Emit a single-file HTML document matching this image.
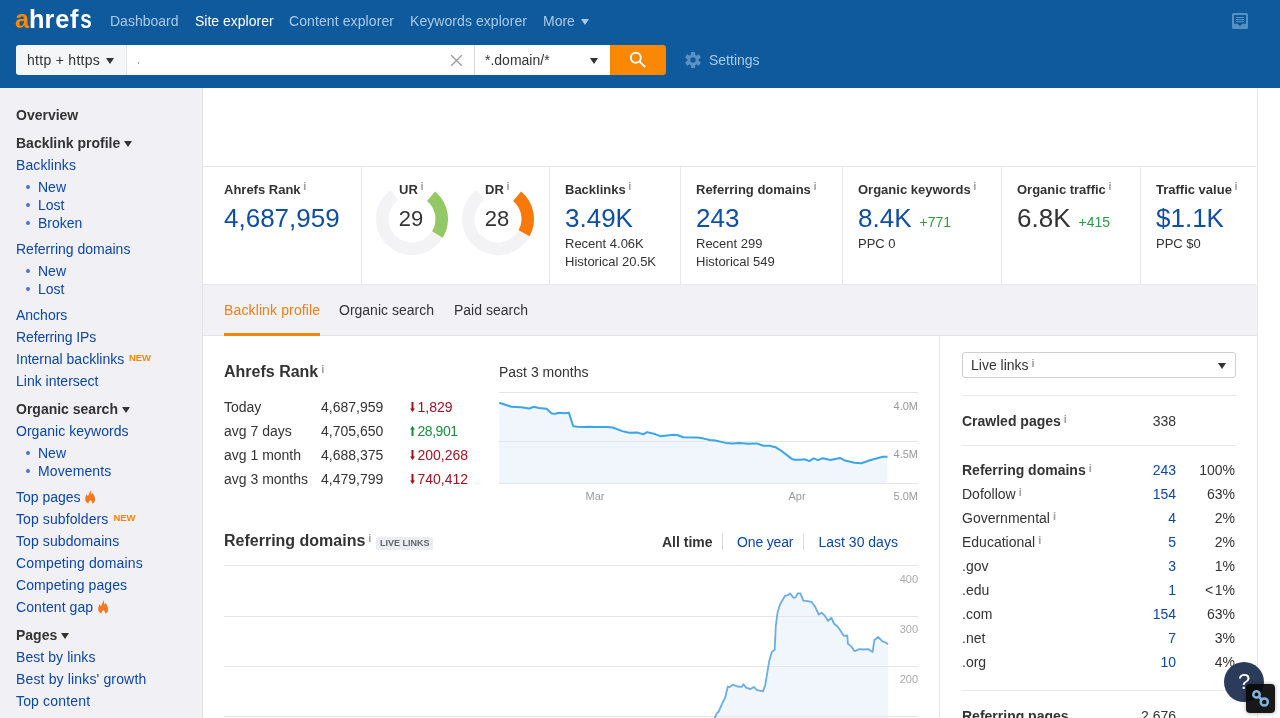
<!DOCTYPE html>
<html lang="en">
<head>
<meta charset="utf-8">
<title>Site explorer</title>
<style>
*{box-sizing:border-box;margin:0;padding:0}
html,body{width:1280px;height:718px;overflow:hidden;background:#fff}
body{font-family:"Liberation Sans",Arial,sans-serif;font-size:14px;color:#333;position:relative}
.abs{position:absolute;white-space:nowrap}
a{color:#0c47a6;text-decoration:none}
#wrap{position:absolute;left:0;top:0;width:1280px;height:718px;will-change:transform}
/* header */
#hdr{position:absolute;left:0;top:0;width:1280px;height:88px;background:#0f5a9c}
#logo{position:absolute;left:15px;top:4px;font-weight:bold;font-size:26px;line-height:30px;color:#fff;letter-spacing:0px;transform-origin:0 0;transform:scaleX(0.975)}
#logo b{color:#ff8800}
.nav{position:absolute;top:12px;font-size:14px;line-height:18px;color:#a9c9ea;white-space:nowrap}
.nav.on{color:#fff}
#sb{position:absolute;left:16px;top:45px;width:650px;height:30px}
#sb .inp{position:absolute;left:111px;top:0;width:484px;height:30px;background:#fff}
#sb .proto{position:absolute;left:0;top:0;width:111px;height:30px;border-radius:3px 0 0 3px;background:#f5f6f8;border-right:1px solid #e3e4e8;font-size:14px;line-height:30px;padding-left:11px;color:#333}
#sb .mode{position:absolute;left:458px;top:0;width:136px;height:30px;border-left:1px solid #d6d6d6;font-size:14px;line-height:30px;padding-left:10px;color:#333}
#sb .go{position:absolute;left:594px;top:0;width:56px;height:30px;border-radius:0 3px 3px 0;background:#fb8805}
.tri{display:inline-block;width:0;height:0;border-left:4px solid transparent;border-right:4px solid transparent;border-top:6px solid #333;vertical-align:middle}
/* sidebar */
#side{position:absolute;left:0;top:88px;width:203px;height:630px;background:#f0f0f5;border-right:1px solid #e1e1e6}
#side .i{position:absolute;left:16px;font-size:14px;line-height:18px;white-space:nowrap;color:#0c47a6}
#side .h{font-weight:bold;color:#333}
#side .s{left:38px}
#side .s:before{content:"";position:absolute;left:-12.3px;top:6.8px;width:4.6px;height:4.6px;border-radius:50%;background:#4677c3}
.fire{display:inline-block;vertical-align:top;margin:2px 0 0 .5px}
.new{font-size:9.5px;font-weight:bold;color:#f9840a;letter-spacing:-.1px;position:relative;top:-3px;margin-left:1px}
.dn{font-size:22px;line-height:24px;text-align:center;color:#333}
.dl{font-size:14px;color:#2d9a3f;margin-left:8px}
.h2{position:absolute;font-weight:bold;font-size:16px;line-height:20px;color:#333;white-space:nowrap}
.rk{position:absolute;font-size:14px;line-height:24px;white-space:nowrap;color:#333}
.rk.r{color:#a0141e}.rk.g{color:#198c3c}
.ar{display:inline-block;margin-right:3px;position:relative;top:0}
.h2 .inf{margin-left:3px}
.badge{display:inline-block;vertical-align:top;margin:6px 0 0 5px;height:13px;padding:0 3.5px;background:#ecedf3;border-radius:2px;font-size:9px;line-height:13.5px;color:#666;font-weight:bold}
.sel{border:1px solid #cfcfcf;border-radius:3px;background:#fff;padding-left:8px;line-height:24px;font-size:14px;color:#333}
.hl{left:962px;width:274px;height:1px;background:#e9e9ec}
.rr{position:absolute;font-size:14px;line-height:24px;white-space:nowrap;color:#333}
.rr .inf,.sel .inf{margin-left:3px;top:-3.2px}
.rr.b{font-weight:bold}.rr.rt{text-align:right}.rr.lk{color:#0c47a6}
/* main */
#rm{position:absolute;left:1257px;top:88px;width:23px;height:630px;background:#fff;border-left:1px solid #e6e6ea}
#stats{position:absolute;left:203px;top:166px;width:1053px;height:119px;border-top:1px solid #e6e6ea;border-bottom:1px solid #e6e6ea}
.vd{position:absolute;top:0;width:1px;height:117px;background:#e7e7eb}
.st{position:absolute;font-weight:bold;font-size:13px;line-height:16px;color:#333;white-space:nowrap}
.big{position:absolute;font-size:26px;line-height:30px;color:#0f4ea3;white-space:nowrap}
.sm{position:absolute;font-size:13px;line-height:16px;color:#333;white-space:nowrap}
.inf{font-size:11px;font-weight:bold;color:#a0a0a0;position:relative;top:-4px;margin-left:2.6px;line-height:1px}
#tabs{position:absolute;left:203px;top:285px;width:1054px;height:51px;background:#f1f1f6;border-bottom:1px solid #e3e3e8}
#tabs span{position:absolute;top:16px;font-size:14px;line-height:18px;white-space:nowrap;color:#333}
</style>
</head>
<body>
<div id="wrap">
<div id="hdr">
  <div id="logo"><b>a</b>hr<span style="margin-left:.9px">e</span><span style="margin-left:.5px">f</span><span style="display:inline-block;margin-left:1.5px;transform-origin:0 50%;transform:scaleX(.82)">s</span></div>
  <span class="nav" style="left:110px">Dashboard</span>
  <span class="nav on" style="left:195px">Site explorer</span>
  <span class="nav" style="left:289px;letter-spacing:.1px">Content explorer</span>
  <span class="nav" style="left:410px;letter-spacing:.06px">Keywords explorer</span>
  <span class="nav" style="left:543px">More <i class="tri" style="border-top-color:#a9c9ea;margin-left:2px"></i></span>
  <div id="sb">
    <div class="inp"></div>
    <div class="proto"><span style="letter-spacing:.29px">http + https</span> <i class="tri" style="margin-left:2px"></i></div>
    <div class="abs" style="left:122px;top:17px;width:1px;height:2px;background:#999"></div>
    <svg class="abs" style="left:434px;top:9px" width="13" height="13" viewBox="0 0 13 13"><path d="M1.2 1.2L11.8 11.8M11.8 1.2L1.2 11.8" stroke="#999" stroke-width="1.3" fill="none"/></svg>
    <div class="mode">*.domain/*<i class="tri" style="position:absolute;left:115px;top:13px"></i></div>
    <div class="go"><svg class="abs" style="left:18px;top:4px" width="26" height="22" viewBox="0 0 26 22"><circle cx="7.8" cy="8.8" r="5" fill="none" stroke="#fff" stroke-width="1.9"/><path d="M11.4 12.4L17.2 18" stroke="#fff" stroke-width="2" fill="none"/></svg></div>
  </div>
<svg class="abs" style="left:684px;top:51px" width="18" height="18" viewBox="-9 -9 18 18"><g fill="#5a92c5"><path fill-rule="evenodd" d="M0-5.6A5.6 5.6 0 1 1 0 5.6 5.6 5.6 0 1 1 0-5.6zM0-2.7A2.7 2.7 0 1 0 0 2.7 2.7 2.7 0 1 0 0-2.7z"/><rect x="-2.1" y="-8" width="4.2" height="4" rx=".6" transform="rotate(0)"/><rect x="-2.1" y="-8" width="4.2" height="4" rx=".6" transform="rotate(60)"/><rect x="-2.1" y="-8" width="4.2" height="4" rx=".6" transform="rotate(120)"/><rect x="-2.1" y="-8" width="4.2" height="4" rx=".6" transform="rotate(180)"/><rect x="-2.1" y="-8" width="4.2" height="4" rx=".6" transform="rotate(240)"/><rect x="-2.1" y="-8" width="4.2" height="4" rx=".6" transform="rotate(300)"/></g></svg>
<svg class="abs" style="left:1232px;top:13px" width="16" height="16" viewBox="0 0 16 16"><g fill="#5590c4"><path fill-rule="evenodd" d="M1.6 0h12.8A1.6 1.6 0 0 1 16 1.6v12.8a1.6 1.6 0 0 1-1.6 1.6H1.6A1.6 1.6 0 0 1 0 14.4V1.6A1.6 1.6 0 0 1 1.6 0zM2 2v8.8h4C6.2 12 7 12.8 8 12.8S9.800 12 10 10.800h4V2z"/><rect x="4" y="4" width="8" height="1"/><rect x="4" y="6" width="8" height="1"/><rect x="4" y="8" width="8" height="1"/></g></svg>
  <span class="nav" style="left:709px;top:51px">Settings</span>
</div>
<div id="side">
  <div class="i h" style="top:18px">Overview</div>
  <div class="i h" style="top:46px">Backlink profile <i class="tri"></i></div>
  <div class="i" style="top:68px;letter-spacing:.1px">Backlinks</div>
  <div class="i s" style="top:90px">New</div>
  <div class="i s" style="top:108px">Lost</div>
  <div class="i s" style="top:126px">Broken</div>
  <div class="i" style="top:152px">Referring domains</div>
  <div class="i s" style="top:174px">New</div>
  <div class="i s" style="top:192px">Lost</div>
  <div class="i" style="top:218px">Anchors</div>
  <div class="i" style="top:240px;letter-spacing:-.13px">Referring IPs</div>
  <div class="i" style="top:262px">Internal backlinks <span class="new">NEW</span></div>
  <div class="i" style="top:284px">Link intersect</div>
  <div class="i h" style="top:312px">Organic search <i class="tri"></i></div>
  <div class="i" style="top:334px;letter-spacing:0.031px">Organic keywords</div>
  <div class="i s" style="top:356px">New</div>
  <div class="i s" style="top:374px;letter-spacing:0.1px">Movements</div>
  <div class="i" style="top:400px">Top pages <svg class="fire" width="10.3" height="14" viewBox="0 0 103 140"><path d="M36 138C10 125 0 105 2 85 4 65 12 55 16 40 20 50 24 58 30 62 38 45 48 25 55 0 60 20 62 35 66 48 70 42 74 36 76 28 88 50 103 70 102 95 101 115 88 130 68 138 75 126 70 113 55 99 42 112 31 124 36 138Z" fill="#f5781e"/></svg></div>
  <div class="i" style="top:422px;letter-spacing:0.1px">Top subfolders <span class="new">NEW</span></div>
  <div class="i" style="top:444px;letter-spacing:0.1px">Top subdomains</div>
  <div class="i" style="top:466px;letter-spacing:0.135px">Competing domains</div>
  <div class="i" style="top:488px;letter-spacing:0.093px">Competing pages</div>
  <div class="i" style="top:510px;letter-spacing:0.082px">Content gap <svg class="fire" width="10.3" height="14" viewBox="0 0 103 140"><path d="M36 138C10 125 0 105 2 85 4 65 12 55 16 40 20 50 24 58 30 62 38 45 48 25 55 0 60 20 62 35 66 48 70 42 74 36 76 28 88 50 103 70 102 95 101 115 88 130 68 138 75 126 70 113 55 99 42 112 31 124 36 138Z" fill="#f5781e"/></svg></div>
  <div class="i h" style="top:538px">Pages <i class="tri"></i></div>
  <div class="i" style="top:560px;letter-spacing:0.069px">Best by links</div>
  <div class="i" style="top:582px;letter-spacing:0.152px">Best by links' growth</div>
  <div class="i" style="top:604px;letter-spacing:0.164px">Top content</div>
</div>
<div id="rm"></div>
<div id="stats"></div>
<div class="vd" style="left:361px;top:167px"></div>
<div class="vd" style="left:549px;top:167px"></div>
<div class="vd" style="left:680px;top:167px"></div>
<div class="vd" style="left:842px;top:167px"></div>
<div class="vd" style="left:1001px;top:167px"></div>
<div class="vd" style="left:1140px;top:167px"></div>
<div class="st" style="left:224px;top:182px">Ahrefs Rank<span class="inf">i</span></div>
<div class="big" style="left:224px;top:203px">4,687,959</div>
<div class="st" style="left:399px;top:182px">UR<span class="inf">i</span></div>
<div class="st" style="left:485px;top:182px">DR<span class="inf">i</span></div>
<svg class="abs" style="left:372px;top:179px" width="80" height="80" viewBox="-40 -40 80 80"><circle r="29.75" fill="none" stroke="#f3f3f6" stroke-width="12.5" stroke-dasharray="147 39.9" transform="rotate(-50)"/><circle r="29.75" fill="none" stroke="#93c965" stroke-width="12.5" stroke-dasharray="42.2 200" transform="rotate(-50)"/></svg>
<svg class="abs" style="left:458px;top:179px" width="80" height="80" viewBox="-40 -40 80 80"><circle r="29.75" fill="none" stroke="#f3f3f6" stroke-width="12.5" stroke-dasharray="147 39.9" transform="rotate(-50)"/><circle r="29.75" fill="none" stroke="#f8780a" stroke-width="12.5" stroke-dasharray="40.7 200" transform="rotate(-50)"/></svg>
<div class="abs dn" style="left:381px;top:207px;width:60px">29</div>
<div class="abs dn" style="left:467px;top:207px;width:60px">28</div>
<div class="st" style="left:565px;top:182px">Backlinks<span class="inf">i</span></div>
<div class="big" style="left:565px;top:203px">3.49K</div>
<div class="sm" style="left:565px;top:236px">Recent 4.06K</div>
<div class="sm" style="left:565px;top:254px">Historical 20.5K</div>
<div class="st" style="left:696px;top:182px">Referring domains<span class="inf">i</span></div>
<div class="big" style="left:696px;top:203px">243</div>
<div class="sm" style="left:696px;top:236px">Recent 299</div>
<div class="sm" style="left:696px;top:254px">Historical 549</div>
<div class="st" style="left:858px;top:182px">Organic keywords<span class="inf">i</span></div>
<div class="big" style="left:858px;top:203px">8.4K<span class="dl">+771</span></div>
<div class="sm" style="left:858px;top:236px">PPC 0</div>
<div class="st" style="left:1017px;top:182px">Organic traffic<span class="inf">i</span></div>
<div class="big" style="left:1017px;top:203px;color:#333">6.8K<span class="dl">+415</span></div>
<div class="st" style="left:1156px;top:182px">Traffic value<span class="inf">i</span></div>
<div class="big" style="left:1156px;top:203px">$1.1K</div>
<div class="sm" style="left:1156px;top:236px">PPC $0</div>
<div id="tabs"><span style="left:21px;color:#f57d14;letter-spacing:.13px">Backlink profile</span><span style="left:136px">Organic search</span><span style="left:251px">Paid search</span><div style="position:absolute;left:21px;top:48px;width:96px;height:3px;background:#f8830a"></div></div>
<svg class="abs" style="left:0;top:0" width="1280" height="718" viewBox="0 0 1280 718">
<path d="M499.3 402.7 L511.3 406.8 L520.8 407.2 L529.4 408.5 L533.7 406.8 L538.8 408.0 L546.6 408.7 L551.7 413.4 L555.2 413.7 L559.5 412.7 L564.6 413.2 L568.9 412.8 L573.2 426.3 L577.5 426.8 L584.4 426.9 L589.5 426.8 L594.7 427.1 L606.7 427.1 L612.7 427.5 L622.2 431.1 L629.1 432.8 L637.7 432.6 L643.2 434.3 L647.1 432.1 L655.7 434.3 L660.3 436.2 L673.8 434.8 L678.0 435.2 L683.2 437.3 L697.8 437.6 L703.8 438.6 L709.8 440.0 L715.3 440.5 L725.6 442.9 L732.5 443.6 L739.4 442.9 L748.0 443.8 L756.6 443.4 L763.4 445.7 L769.5 445.7 L775.5 447.2 L780.6 450.3 L791.8 458.9 L794.4 459.8 L800.4 459.8 L804.7 459.3 L809.3 461.1 L813.6 458.4 L818.1 460.1 L822.7 458.2 L830.5 459.9 L839.9 457.9 L845.1 460.6 L854.5 462.7 L861.4 463.2 L870.0 460.3 L882.9 456.7 L887.5 456.8 L887.5 483 L499 483 Z" fill="#f1f6fd"/>
<g stroke="#e6e6e6" stroke-width="1" shape-rendering="crispEdges"><path d="M499 392.5H918M499 441.5H918M499 483.5H918"/></g>
<path d="M499.3 402.7 L511.3 406.8 L520.8 407.2 L529.4 408.5 L533.7 406.8 L538.8 408.0 L546.6 408.7 L551.7 413.4 L555.2 413.7 L559.5 412.7 L564.6 413.2 L568.9 412.8 L573.2 426.3 L577.5 426.8 L584.4 426.9 L589.5 426.8 L594.7 427.1 L606.7 427.1 L612.7 427.5 L622.2 431.1 L629.1 432.8 L637.7 432.6 L643.2 434.3 L647.1 432.1 L655.7 434.3 L660.3 436.2 L673.8 434.8 L678.0 435.2 L683.2 437.3 L697.8 437.6 L703.8 438.6 L709.8 440.0 L715.3 440.5 L725.6 442.9 L732.5 443.6 L739.4 442.9 L748.0 443.8 L756.6 443.4 L763.4 445.7 L769.5 445.7 L775.5 447.2 L780.6 450.3 L791.8 458.9 L794.4 459.8 L800.4 459.8 L804.7 459.3 L809.3 461.1 L813.6 458.4 L818.1 460.1 L822.7 458.2 L830.5 459.9 L839.9 457.9 L845.1 460.6 L854.5 462.7 L861.4 463.2 L870.0 460.3 L882.9 456.7 L887.5 456.8" fill="none" stroke="#3aa6e8" stroke-width="2" stroke-linejoin="round"/>
<path d="M714.6 718.0 L716.8 713.3 L718.6 711.8 L721.9 704.1 L725.2 697.5 L727.8 686.5 L729.6 687.1 L732.9 684.7 L737.3 686.5 L741.7 686.9 L743.5 684.3 L746.1 687.6 L750.5 689.1 L753.8 686.9 L757.1 690.2 L763.0 691.3 L765.2 685.4 L767.0 674.4 L769.2 661.2 L771.8 651.9 L774.7 649.7 L775.8 626.0 L777.5 612.8 L780.2 604.0 L785.0 595.9 L787.9 595.2 L790.1 593.4 L793.4 597.8 L795.6 597.4 L797.8 593.4 L800.4 593.4 L803.3 600.7 L807.7 601.1 L811.4 601.8 L815.4 607.3 L818.7 614.6 L821.5 612.8 L824.6 615.4 L828.1 620.9 L831.4 617.6 L834.1 623.8 L837.8 626.7 L844.0 635.9 L847.3 635.5 L847.9 643.6 L851.7 646.9 L854.5 651.3 L859.4 649.1 L863.8 649.5 L868.2 649.1 L872.6 651.9 L874.3 640.3 L878.1 637.0 L882.5 641.4 L885.8 642.5 L888.0 644.2 L888 718 L714.6 718 Z" fill="#f1f6fd"/>
<g stroke="#e6e6ea" stroke-width="1" shape-rendering="crispEdges"><path d="M224 565.5H918M224 616.5H918M224 666.5H918M224 716.5H918"/></g>
<path d="M714.6 718.0 L716.8 713.3 L718.6 711.8 L721.9 704.1 L725.2 697.5 L727.8 686.5 L729.6 687.1 L732.9 684.7 L737.3 686.5 L741.7 686.9 L743.5 684.3 L746.1 687.6 L750.5 689.1 L753.8 686.9 L757.1 690.2 L763.0 691.3 L765.2 685.4 L767.0 674.4 L769.2 661.2 L771.8 651.9 L774.7 649.7 L775.8 626.0 L777.5 612.8 L780.2 604.0 L785.0 595.9 L787.9 595.2 L790.1 593.4 L793.4 597.8 L795.6 597.4 L797.8 593.4 L800.4 593.4 L803.3 600.7 L807.7 601.1 L811.4 601.8 L815.4 607.3 L818.7 614.6 L821.5 612.8 L824.6 615.4 L828.1 620.9 L831.4 617.6 L834.1 623.8 L837.8 626.7 L844.0 635.9 L847.3 635.5 L847.9 643.6 L851.7 646.9 L854.5 651.3 L859.4 649.1 L863.8 649.5 L868.2 649.1 L872.6 651.9 L874.3 640.3 L878.1 637.0 L882.5 641.4 L885.8 642.5 L888.0 644.2" fill="none" stroke="#6aaee2" stroke-width="1.8" stroke-linejoin="round"/>
<g font-family="Liberation Sans, sans-serif" font-size="11" fill="#999">
<text x="918" y="409.5" text-anchor="end">4.0M</text><text x="918" y="458" text-anchor="end">4.5M</text><text x="918" y="500" text-anchor="end">5.0M</text>
<text x="595" y="500" text-anchor="middle">Mar</text><text x="797" y="500" text-anchor="middle">Apr</text>
<text x="918" y="583" text-anchor="end" fill="#aaa">400</text><text x="918" y="633" text-anchor="end" fill="#aaa">300</text><text x="918" y="683" text-anchor="end" fill="#aaa">200</text>
</g></svg>
<div class="h2" style="left:224px;top:362px">Ahrefs Rank<span class="inf">i</span></div>
<div class="abs" style="left:499px;top:363px;line-height:18px">Past 3 months</div>
<div class="rk" style="left:224px;top:395px">Today</div><div class="rk" style="left:321px;top:395px">4,687,959</div><div class="rk r" style="left:409.5px;top:395px"><svg width="5" height="10" viewBox="0 0 5 10" class="ar"><path d="M1.5 0h2v6.6H5L2.5 10 0 6.6h1.5z" fill="#a0141e"/></svg>1,829</div>
<div class="rk" style="left:224px;top:419px">avg 7 days</div><div class="rk" style="left:321px;top:419px">4,705,650</div><div class="rk g" style="left:409.5px;top:419px"><svg width="5" height="10" viewBox="0 0 5 10" class="ar"><path d="M1.5 10h2V3.4H5L2.5 0 0 3.4h1.5z" fill="#198c3c"/></svg><span style="letter-spacing:-.45px">28,901</span></div>
<div class="rk" style="left:224px;top:443px">avg 1 month</div><div class="rk" style="left:321px;top:443px">4,688,375</div><div class="rk r" style="left:409.5px;top:443px"><svg width="5" height="10" viewBox="0 0 5 10" class="ar"><path d="M1.5 0h2v6.6H5L2.5 10 0 6.6h1.5z" fill="#a0141e"/></svg>200,268</div>
<div class="rk" style="left:224px;top:467px">avg 3 months</div><div class="rk" style="left:321px;top:467px">4,479,799</div><div class="rk r" style="left:409.5px;top:467px"><svg width="5" height="10" viewBox="0 0 5 10" class="ar"><path d="M1.5 0h2v6.6H5L2.5 10 0 6.6h1.5z" fill="#a0141e"/></svg>740,412</div>
<div class="h2" style="left:224px;top:531px">Referring domains<span class="inf">i</span><span class="badge">LIVE LINKS</span></div>
<div class="abs" style="left:662px;top:533px;line-height:18px;font-weight:bold">All time</div><div class="abs" style="left:737px;top:533px;line-height:18px;color:#0c47a6;letter-spacing:-.15px">One year</div><div class="abs" style="left:818.5px;top:533px;line-height:18px;color:#0c47a6">Last 30 days</div>
<div class="abs" style="left:722px;top:533px;width:1px;height:17px;background:#d8d8dc"></div><div class="abs" style="left:803px;top:533px;width:1px;height:17px;background:#d8d8dc"></div>
<div class="abs" style="left:939px;top:336px;width:1px;height:382px;background:#e6e6ea"></div>
<div class="abs sel" style="left:962px;top:352px;width:274px;height:26px">Live links<span class="inf">i</span><i class="tri" style="position:absolute;right:9px;top:10px"></i></div>
<div class="abs hl" style="top:395px"></div><div class="abs hl" style="top:445px"></div><div class="abs hl" style="top:690px"></div>
<div class="rr b" style="left:962px;top:409px">Crawled pages<span class="inf">i</span></div><div class="rr rt" style="left:1096px;top:409px;width:80px">338</div>
<div class="rr b" style="left:962px;top:458px">Referring domains<span class="inf">i</span></div><div class="rr rt lk" style="left:1096px;top:458px;width:80px">243</div><div class="rr rt" style="left:1175px;top:458px;width:60px">100%</div>
<div class="rr" style="left:962px;top:482px">Dofollow<span class="inf">i</span></div><div class="rr rt lk" style="left:1096px;top:482px;width:80px">154</div><div class="rr rt" style="left:1175px;top:482px;width:60px">63%</div>
<div class="rr" style="left:962px;top:506px">Governmental<span class="inf">i</span></div><div class="rr rt lk" style="left:1096px;top:506px;width:80px">4</div><div class="rr rt" style="left:1175px;top:506px;width:60px">2%</div>
<div class="rr" style="left:962px;top:530px">Educational<span class="inf">i</span></div><div class="rr rt lk" style="left:1096px;top:530px;width:80px">5</div><div class="rr rt" style="left:1175px;top:530px;width:60px">2%</div>
<div class="rr" style="left:962px;top:554px">.gov</div><div class="rr rt lk" style="left:1096px;top:554px;width:80px">3</div><div class="rr rt" style="left:1175px;top:554px;width:60px">1%</div>
<div class="rr" style="left:962px;top:578px">.edu</div><div class="rr rt lk" style="left:1096px;top:578px;width:80px">1</div><div class="rr rt" style="left:1175px;top:578px;width:60px"><span style="margin-right:1.6px">&lt;</span>1%</div>
<div class="rr" style="left:962px;top:602px">.com</div><div class="rr rt lk" style="left:1096px;top:602px;width:80px">154</div><div class="rr rt" style="left:1175px;top:602px;width:60px">63%</div>
<div class="rr" style="left:962px;top:626px">.net</div><div class="rr rt lk" style="left:1096px;top:626px;width:80px">7</div><div class="rr rt" style="left:1175px;top:626px;width:60px">3%</div>
<div class="rr" style="left:962px;top:650px">.org</div><div class="rr rt lk" style="left:1096px;top:650px;width:80px">10</div><div class="rr rt" style="left:1175px;top:650px;width:60px">4%</div>
<div class="rr b" style="left:962px;top:704px">Referring pages</div><div class="rr rt" style="left:1096px;top:704px;width:80px">2,676</div>
<div class="abs" style="left:1224px;top:662px;width:40px;height:40px;border-radius:20px;background:#2b3b5a;color:#fff;font-size:22px;line-height:40px;text-align:center">?</div>
<div class="abs" style="left:1246px;top:684px;width:29px;height:29px;border-radius:4px;background:rgba(10,10,10,.94);box-shadow:0 0 4px rgba(0,0,0,.35)"><svg width="29" height="29" viewBox="0 0 29 29" style="display:block"><g fill="none" stroke="#80b2dd" stroke-width="2.5"><circle cx="10.5" cy="10.4" r="3.2"/><circle cx="18.3" cy="18" r="3.6"/><path d="M12 12L16.600 16.400" stroke-width="2.6"/></g></svg></div>
</div>
</body>
</html>
